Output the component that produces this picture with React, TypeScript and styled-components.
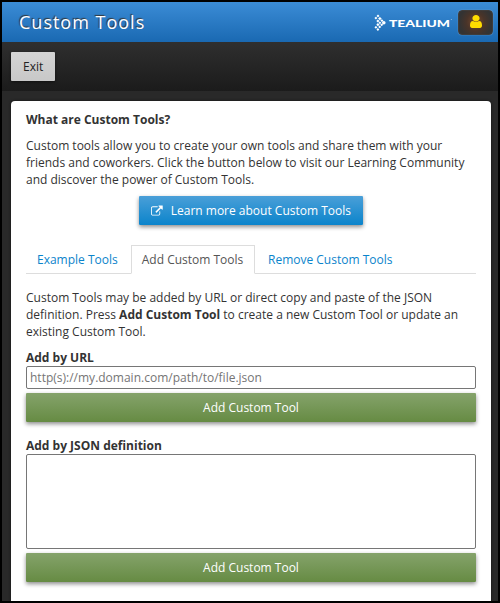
import React from "react";
import styled, { createGlobalStyle, css } from "styled-components";

const GlobalStyle = createGlobalStyle`
  *, *::before, *::after { box-sizing: border-box; }
  body {
    margin: 0;
    background: #000;
    font-family: "Open Sans", "Noto Sans", sans-serif;
    font-size: 12px;
    line-height: 17px;
    color: #333;
  }
`;

const Frame = styled.div`
  height: 603px;
  border: 2px solid #000;
  background: #292929;
  overflow: hidden;
`;

const Header = styled.header`
  display: flex;
  align-items: center;
  height: 40px;
  padding: 0 5px 0 17px;
  background: linear-gradient(#3b8cd6, #1a69b2);
`;

const Title = styled.h1`
  flex: 1;
  margin: 0;
  font-size: 18px;
  line-height: 24px;
  font-weight: 400;
  letter-spacing: 1px;
  color: #fff;
  text-shadow: -1px -1px 1px #333;
`;

const Logo = styled.svg`
  display: block;
  width: 79px;
  height: 18px;
  margin: 2px 5px 0 0;
`;

const UserButton = styled.button`
  display: flex;
  align-items: center;
  justify-content: center;
  width: 35px;
  height: 25px;
  margin-top: 1px;
  padding: 0 0 2px;
  border: 1px solid #403c3a;
  border-radius: 4px;
  background: radial-gradient(circle at 50% 48%, #79482a 0, #493429 9px, #333 16px);
  box-shadow: 0 0 1px #a8bccf;
  color: #ffdc00;
`;

const Toolbar = styled.nav`
  height: 49px;
  padding: 10px 9px;
  background: linear-gradient(#2f2f2f, #1b1b1b);
`;

const Button = styled.button<{ $tone: "grey" | "blue" | "green" }>`
  display: flex;
  align-items: center;
  justify-content: center;
  height: 29px;
  padding: 0 12px;
  border: 0;
  border-radius: 1px;
  font: inherit;
  white-space: nowrap;
  ${({ $tone }) =>
    $tone === "grey"
      ? css`
          background: linear-gradient(#d4d4d4, #c8c8c8);
          color: #222;
          box-shadow: 0 1px 3px rgba(0, 0, 0, 0.5);
        `
      : $tone === "blue"
      ? css`
          width: 224px;
          margin: 8px auto 0;
          gap: 8px;
          background: linear-gradient(#4a9fd8, #0b84cb);
          color: #fff;
          box-shadow: 0 2px 4px rgba(0, 0, 0, 0.45);
        `
      : css`
          width: 100%;
          margin-top: 4px;
          background: linear-gradient(#85a36b, #668b43);
          color: #fff;
          box-shadow: 0 2px 4px rgba(0, 0, 0, 0.45);
        `}
`;

const Panel = styled.main`
  height: 520px;
  margin: 10px 7px 0 9px;
  padding: 10px 15px;
  border-radius: 4px;
  background: #fff;
  box-shadow: 0 0 3px #111;
`;

const Heading = styled.h2`
  margin: 0 0 9px;
  font-size: 12px;
  line-height: 17px;
  font-weight: 700;
`;

const Paragraph = styled.p`
  margin: 0;
  white-space: nowrap;
`;

const Tabs = styled.div`
  display: flex;
  align-items: flex-end;
  height: 29px;
  margin: 20px 0 15px;
  border-bottom: 1px solid #ddd;
`;

const Tab = styled.button<{ $active?: boolean }>`
  height: 29px;
  margin-bottom: -1px;
  padding: 0 ${({ $active }) => ($active ? "10.7px" : "10px")} 1px 10px;
  border: 1px solid ${({ $active }) => ($active ? "#ddd" : "transparent")};
  border-bottom-color: ${({ $active }) => ($active ? "#fff" : "transparent")};
  background: ${({ $active }) => ($active ? "#fff" : "transparent")};
  color: ${({ $active }) => ($active ? "#555" : "#0b84cb")};
  font: inherit;
  white-space: nowrap;
  & + & { margin-left: 2px; }
`;

const Label = styled.label<{ $gap: number }>`
  display: block;
  margin-top: ${({ $gap }) => $gap}px;
  font-weight: 700;
`;

const fieldStyle = css`
  display: block;
  width: 100%;
  border: 1px solid #767676;
  border-radius: 2px;
  background: #fff;
  font: inherit;
  outline: none;
`;

const Input = styled.input`
  ${fieldStyle}
  height: 23px;
  padding: 0 3px;
  &::placeholder { color: #757575; opacity: 1; }
`;

const TextArea = styled.textarea`
  ${fieldStyle}
  height: 95px;
  resize: none;
`;

const UserIcon = () => (
  <svg width="12" height="13" viewBox="0 0 1280 1536" preserveAspectRatio="none" fill="currentColor">
    <path d="M1280 1271q0 109-62.5 187t-150.5 78H213q-88 0-150.5-78T0 1271q0-85 8.5-160.5t31.5-152 58.5-131 94-89T327 704q131 128 313 128t313-128q76 0 134.5 34.5t94 89 58.5 131 31.5 152 8.5 160.5zM1024 384q0 159-112.5 271.5T640 768 368.5 655.5 256 384t112.5-271.5T640 0t271.5 112.5T1024 384z" />
  </svg>
);

const ExternalIcon = () => (
  <svg width="12" height="11" viewBox="0 0 1792 1536" fill="currentColor">
    <path d="M1408 928v320q0 119-84.5 203.5T1120 1536H288q-119 0-203.5-84.5T0 1248V416q0-119 84.5-203.5T288 128h704q14 0 23 9t9 23v64q0 14-9 23t-23 9H288q-66 0-113 47t-47 113v832q0 66 47 113t113 47h832q66 0 113-47t47-113V928q0-14 9-23t23-9h64q14 0 23 9t9 23zm384-864v512q0 26-19 45t-45 19-45-19l-176-176-652 652q-10 10-23 10t-23-10l-114-114q-10-10-10-23t10-23l652-652-176-176q-19-19-19-45t19-45 45-19h512q26 0 45 19t19 45z" />
  </svg>
);

const TealiumLogo = () => (
  <Logo viewBox="0 0 79 18" fill="#fff">
    <path d="M4 .5l1.500 1.400L4 3.300 2.500 1.900zM1.900 2.700l1.500 1.400-1.500 1.400L.4 4.100zM5.900 3l1.800 1.600-1.800 1.600-1.800-1.600zM3.900 5.400l1.600 1.600-1.600 1.600L2.300 7zM7.900 5.200l1.500 1.400L7.900 8 6.400 6.600zM5.900 7.400l1.400 1.400-1.400 1.400-1.400-1.400zM3.900 9.100l1.600 1.600-1.600 1.600-1.600-1.600zM7.700 9.400l1.500 1.400-1.500 1.400-1.500-1.400zM1.900 11.900l1.500 1.400-1.500 1.400-1.500-1.400zM5.700 11.500l1.500 1.400-1.500 1.400-1.500-1.400zM3.900 14.100l1.400 1.400-1.400 1.400-1.400-1.400z" />
    <circle cx="9.800" cy="8.700" r="1.800" />
    <text
      x="15"
      y="12.500"
      fontFamily="Lato, sans-serif"
      fontSize="10"
      fontWeight="900"
      textLength="61"
      lengthAdjust="spacingAndGlyphs"
    >
      TEALIUM
    </text>
    <circle cx="77.200" cy="5.500" r=".4" />
  </Logo>
);

export default function App() {
  return (
    <>
      <GlobalStyle />
      <Frame>
        <Header>
          <Title>Custom Tools</Title>
          <TealiumLogo />
          <UserButton aria-label="Account">
            <UserIcon />
          </UserButton>
        </Header>
        <Toolbar>
          <Button $tone="grey">Exit</Button>
        </Toolbar>
        <Panel>
          <Heading>What are Custom Tools?</Heading>
          <Paragraph>
            Custom tools allow you to create your own tools and share them with your
            <br />
            friends and coworkers. Click the button below to visit our Learning Community
            <br />
            and discover the power of Custom Tools.
          </Paragraph>
          <Button $tone="blue">
            <ExternalIcon />
            Learn more about Custom Tools
          </Button>
          <Tabs>
            <Tab>Example Tools</Tab>
            <Tab $active>Add Custom Tools</Tab>
            <Tab>Remove Custom Tools</Tab>
          </Tabs>
          <Paragraph>
            Custom Tools may be added by URL or direct copy and paste of the JSON
            <br />
            definition. Press <b>Add Custom Tool</b> to create a new Custom Tool or update an
            <br />
            existing Custom Tool.
          </Paragraph>
          <Label htmlFor="tool-url" $gap={9}>Add by URL</Label>
          <Input id="tool-url" placeholder="http(s)://my.domain.com/path/to/file.json" />
          <Button $tone="green">Add Custom Tool</Button>
          <Label htmlFor="tool-json" $gap={15}>Add by JSON definition</Label>
          <TextArea id="tool-json" />
          <Button $tone="green">Add Custom Tool</Button>
        </Panel>
      </Frame>
    </>
  );
}
